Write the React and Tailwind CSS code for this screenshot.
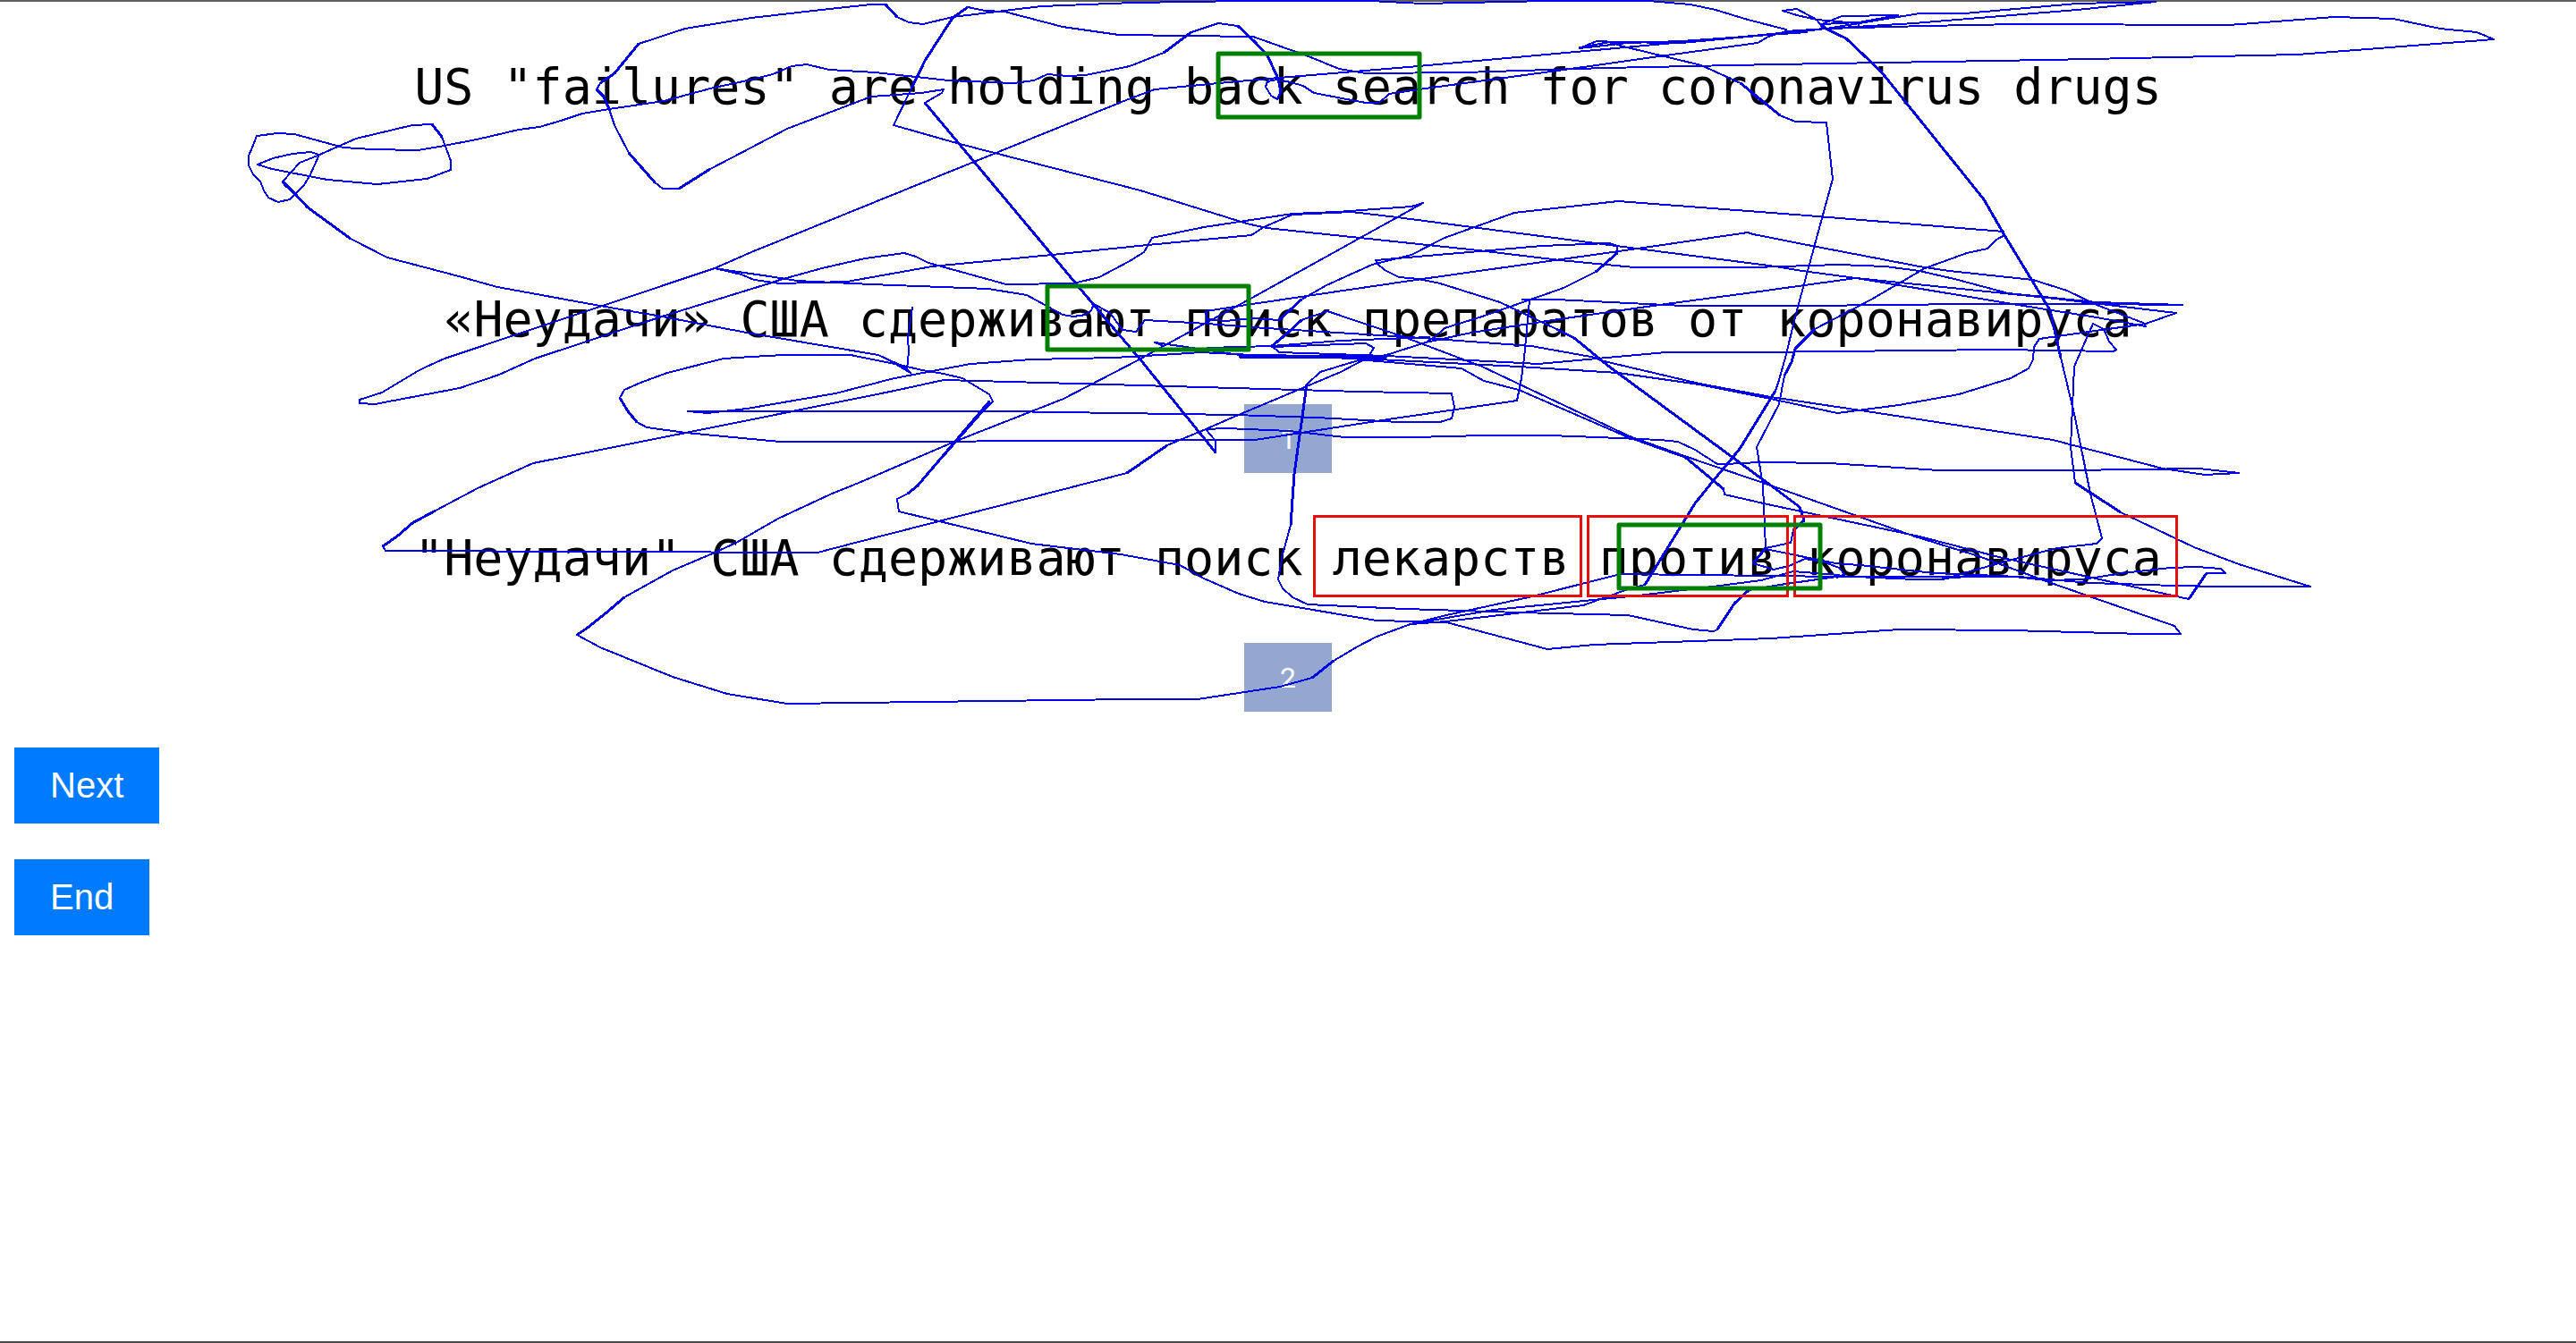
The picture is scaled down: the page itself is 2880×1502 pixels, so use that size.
const STROKES = [
  "288,184 304,189 366,201 422,206 477,200 504,190 504,180 500,169 494,153 483,139 461,140 398,155 355,174 335,182 326,192 316,203 318,207 330,217 344,232 392,267 433,288 513,309 556,321 671,342 740,354 840,373 864,377 982,397 1010,410 1015,415",
  "288,184 305,177 327,172 347,170 354,172 356,175 347,195 340,207 324,223 311,226 300,221 295,213 291,203 283,195 278,185 278,174 282,165 287,152 310,149 329,150 384,165 416,167 467,168 491,164 533,156 580,145 603,142 627,135 651,127 681,122 742,113 794,99 840,89 864,83 885,74 902,72 927,78 978,81 1061,90 1133,93 1156,90 1171,83 1194,85 1214,84 1263,74 1301,59 1332,36 1362,26 1384,29 1403,47 1417,62 1429,88 1432,103 1428,111 1421,107 1415,97 1417,91 1428,89 1443,92 1457,96 1469,104 1527,115 1542,115 1553,105 1586,100 1756,77 1855,63 1965,48 1977,41 1997,35 2042,32",
  "1843,1 1730,1 1590,4 1532,1 1390,1 1267,3 1164,7 1123,12 1065,19 1032,27 1016,25 1003,19 990,5 974,5 927,10 840,20 766,32 714,49 687,82 671,93 667,100 675,108 681,122 687,140 703,171 732,204 741,211 759,211 794,189 840,165 880,144 974,108 1030,104 1055,100 1053,104 1034,115 1222,340 1274,401 1359,506 1359,493 1348,480 1371,479 1442,482 1503,489 1581,489 1659,487 1732,487 1786,489 1856,492 1876,494 1895,503 1920,519 1931,519 1945,518 1969,517 2045,518 2168,526 2313,526 2458,524 2503,529 2465,531 2418,524 2295,492 2087,460 1980,444 1900,429 1789,403 1784,400 1712,387 1590,378 1400,366 1350,362 1348,348",
  "1082,8 1065,20 1034,68 999,140 1073,161 1275,213 1394,250 1416,255 1653,280 1744,291 1827,299 1960,299 2056,296 2108,298 2146,303 2185,312 2245,328 2344,338 2440,341",
  "1082,8 1101,12 1123,13 1188,30 1251,39 1401,41 1463,63 1497,77 1527,82 1637,81 1795,76 1985,72 2289,67 2569,61 2788,44 2769,36 2728,32 2676,21 2610,19 2492,28 2256,27 2152,29 2042,32 1960,40 1586,74 1430,87 1362,93 1291,100 1259,112 840,282 799,300 497,401 477,410 467,415 427,439 402,447 402,451 419,452 514,434 558,419 598,401 740,354 860,317 872,313 919,300 967,289 1011,283 1024,287 1038,294 1125,318 1200,317 1229,310 1263,292 1279,282 1288,266 1346,254 1445,239 1495,237 1578,231 1591,227 1400,333 1301,387 1291,383 1326,388 1386,397 1550,399",
  "799,300 825,304 860,309 891,314 974,318 1105,323 1148,330 1188,352 1200,354 1214,352 1220,347 1223,340 1241,350 1255,369 1270,371 1280,358 1350,362",
  "799,300 829,307 843,313 872,317 947,315 1042,298 1176,285 1283,274 1399,263 1413,254 1445,240 1511,237 1562,243 1653,255 1807,275 1985,298 2015,303 2075,311 2256,341 2344,355 2399,365 2396,361 2344,341 2311,325 2273,313 2179,303 2146,298 2026,275 1960,262 1954,260 1831,278 1590,312 1400,340 1348,348 1350,357 1370,359 1401,356 1430,358 1455,335 1483,319 1534,296 1578,285 1615,266 1693,238 1809,225 2020,241 2240,259 2241,263 2232,268 2222,278 2199,283 2152,300 2092,335 2029,368 2007,390 2003,405 1995,420 1989,452 1964,500 1971,543 1974,613",
  "1461,430 1476,416 1522,402 1550,397 1594,383 1604,377 1615,367 1657,354 1714,334 1748,322 1784,304 1808,283 1808,275 1799,272 1724,275 1538,291 1540,295 1548,302 1564,310 1586,312 1610,317 1677,338 1740,368 1760,378 1799,410 1935,510 1980,543 2012,567 2017,582 2005,593 2002,607 1974,613 1960,630 1983,637 2000,633 2018,625 2038,628 2056,635 2062,642 2054,646",
  "2440,341 2338,340 2201,340 2020,342 1882,342 1740,335 1702,335 1710,336 1704,400 1701,423 1696,448 1552,469 1403,492 1228,493 960,494 872,494 767,484 723,478 712,472 702,460 693,445 698,436 716,428 746,417 809,401 840,399 876,397 951,397 1010,409 1031,414 1055,418 1076,423 1106,441 1110,449 1099,460 1026,543 1015,552 1003,558 1005,572 1153,608 1253,620 1319,632 1346,647 1385,664 1414,673 1539,694 1617,696 1730,726 1782,721 1980,714 2123,704 2248,705 2396,709 2438,709 2431,700 2293,652 2212,622 2141,600 1980,543 1889,512 1822,488 1657,410 1570,377 1484,348 1455,358 1440,372 1422,387 1430,394 1550,398",
  "1518,402 1634,412 1659,426 1698,436 1820,489 1885,512 1927,547 1928,553 1976,564 2146,600 2235,623 2447,670 2467,641 2488,641 2483,636 2456,634 2427,635 2373,641 2329,648 2288,649 2253,645 2212,644 2172,647",
  "1350,389 1422,387 1499,381 1598,377",
  "1422,388 1527,384 1536,389 1529,400 1499,416 1380,466 1348,480 1305,498 1260,529 960,606 914,618 673,617 431,616 428,611 445,599 461,585 487,571 534,546 596,518 767,484 1000,437 1055,425 1239,430 1520,438 1623,440 1626,455 1623,468 1610,472 1564,472 1472,467 1380,464 1121,460 960,460 769,460 791,462 835,457 934,440 1000,423 1085,407 1153,402 1246,400 1314,396 1342,394 1400,397 1550,399",
  "1301,387 1272,403 1189,446 1067,494 960,540 928,553 870,580 823,607 799,618 752,638 698,668 677,686 657,702 645,710 671,724 752,757 813,776 880,787 957,786 1110,784 1264,782 1339,782 1431,768 1467,758 1491,739 1518,723 1539,712 1577,698 1617,688 1709,668 1812,642 1980,644 2054,645 2141,645 2253,645",
  "1020,344 1015,378 1016,393 1014,413 1018,417 989,400",
  "1461,430 1454,480 1447,530 1443,587 1434,620 1429,648 1434,658 1445,668 1462,676 1571,681 1698,685 1820,688 1893,704 1916,706 1920,704 1939,675 1955,660 1990,654 2060,644",
  "1577,698 1617,695 1770,677 1820,659 1839,654 1895,563 1916,537 1945,502 1985,437 1989,425 1996,400 2009,347 2049,200 2042,137 2007,136 1990,129 1960,106 1946,93 1902,73 1815,52 1795,46 1785,46 1766,54 1820,48 1880,46 2020,36",
  "1766,53 1800,47 1880,48 1997,37 2042,32 2146,15 2196,15 2322,4 2410,2 2322,11 2140,26 2042,32",
  "2037,30 2031,22 2009,10 1993,12 2009,17 2031,22 2078,26 2078,30",
  "2042,32 2037,27 2059,18 2122,17 2078,25 2037,27",
  "2037,30 2064,43 2103,80 2218,223 2241,263 2292,347 2304,400 2320,467 2337,552 2350,602 2344,608 2300,613 2253,625 2199,640 2172,648 2141,648 2052,644",
  "1843,1 1890,5 1918,11 1954,22 1997,33",
  "1550,398 1720,407 1863,394 1960,394 2234,391 2363,393 2366,391 2358,382 2352,368 2340,362 2319,410 2315,500 2320,540 2371,573 2453,612 2503,631 2583,656 2485,656 2431,655 2337,652 2257,645 2163,641 2079,632 2052,630 1974,614",
  "1594,383 1645,372 1736,358 1855,341 1960,327 2075,311 2289,333 2433,350 2399,362 2280,379 2274,388 2273,402 2268,412 2248,423 2190,441 2123,453 2054,462 1989,448 1900,430 1809,417 1698,410 1522,401 1386,398",
  "1577,698 1670,682 1832,666 1923,655 1969,649 2005,639 2056,643",
];

const BOLD_STROKES = [
  "714,49 687,82 671,93",
  "667,100 675,108 681,122",
  "703,171 732,204",
  "759,211 794,189",
  "316,203 330,217 344,232 392,267",
  "494,153 483,139",
  "1034,115 1222,340 1274,401 1359,506",
  "1082,8 1065,20 1034,68 1020,97",
  "990,5 1003,19",
  "1301,59 1332,36",
  "1384,29 1403,47 1417,62 1429,88 1432,103 1428,111",
  "1106,449 1026,543 1015,552",
  "1305,498 1260,529",
  "698,668 677,686 657,702 645,710",
  "428,611 445,599 461,585 487,571",
  "693,445 702,460 712,472",
  "1740,368 1760,378 1799,410 1935,510 1980,543 2012,567 2017,582 2005,593",
  "1974,613 1960,630",
  "1985,437 1945,502 1916,537 1895,563 1839,654",
  "2037,30 2064,43 2103,80 2218,223 2241,263 2292,347 2304,400",
  "1885,512 1927,547",
  "1455,335 1430,358",
  "1455,358 1440,372 1422,387",
  "1808,283 1784,304",
  "1946,93 1990,129",
  "1467,758 1491,739",
  "1461,430 1447,530 1443,587",
  "1920,704 1939,675 1955,660",
  "2029,368 2007,390 2003,405 1995,420",
  "1386,399 1550,399",
  "2320,540 2371,573",
  "2447,670 2467,641",
];

const FOCUS_AREAS = [
  { x: 1362, y: 60 },
  { x: 1171, y: 320 },
  { x: 1810, y: 587 },
];

function GazeTrace() {
  return (
    <svg
      className="pointer-events-none absolute top-0 left-1/2 z-10 -translate-x-1/2"
      width="2880"
      height="820"
      viewBox="0 0 2880 820"
      fill="none"
      aria-hidden="true"
    >
      <g stroke="#0000e6" strokeLinejoin="round" strokeLinecap="round" shapeRendering="crispEdges">
        {STROKES.map((points) => (
          <polyline key={points} points={points} strokeWidth="2" />
        ))}
        {BOLD_STROKES.map((points) => (
          <polyline key={points} points={points} strokeWidth="3" />
        ))}
      </g>
    </svg>
  );
}

function FocusAreas() {
  return (
    <svg
      className="pointer-events-none absolute top-0 left-1/2 z-30 -translate-x-1/2"
      width="2880"
      height="820"
      viewBox="0 0 2880 820"
      fill="none"
      aria-hidden="true"
    >
      {FOCUS_AREAS.map(({ x, y }) => (
        <rect key={x} x={x} y={y} width="225" height="71" stroke="#008000" strokeWidth="5" strokeLinejoin="round" />
      ))}
    </svg>
  );
}

function Marked({ children, edge }) {
  return (
    <span className="relative">
      {children}
      <span className={`absolute -top-4 -bottom-3 z-20 border-3 border-[#e60f0f] ${edge}`} />
    </span>
  );
}

function Sentence({ children }) {
  return (
    <p className="text-center font-['DejaVu_Sans_Mono','Liberation_Mono',monospace] text-[55px] leading-[70px] whitespace-nowrap">
      {children}
    </p>
  );
}

function Choice({ children }) {
  return (
    <button className="mx-auto my-[60px] block h-[77px] w-[98px] bg-[#94a7d0] font-[Roboto,'Liberation_Sans',sans-serif] text-[32px] text-white">
      {children}
    </button>
  );
}

function Action({ children }) {
  return (
    <button className="bg-[#007bff] px-10 py-5 font-['Liberation_Sans',Arial,sans-serif] text-[40px] leading-[45px] text-white">
      {children}
    </button>
  );
}

export default function App() {
  return (
    <main className="relative flex min-h-screen flex-col overflow-hidden bg-white text-black">
      <div className="h-0.5 bg-[#5f5f5f]" />
      <GazeTrace />
      <FocusAreas />
      <div className="pt-[60px]">
        <Sentence>US "failures" are holding back search for coronavirus drugs</Sentence>
      </div>
      <div className="mt-[190px]">
        <Sentence>«Неудачи» США сдерживают поиск препаратов от коронавируса</Sentence>
        <Choice>1</Choice>
        <Sentence>
          "Неудачи" США сдерживают поиск <Marked edge="-left-[22px] -right-3.5">лекарств</Marked>{" "}
          <Marked edge="-inset-x-3.5">против</Marked> <Marked edge="-left-3.5 -right-[18px]">коронавируса</Marked>
        </Sentence>
      </div>
      <div className="mb-10">
        <div className="-mb-[20px]">
          <Choice>2</Choice>
        </div>
      </div>
      <div className="-mt-10 flex flex-col items-start gap-10 px-4">
        <Action>Next</Action>
        <Action>End</Action>
      </div>
      <div className="mt-auto h-0.5 bg-[#484848]" />
    </main>
  );
}
